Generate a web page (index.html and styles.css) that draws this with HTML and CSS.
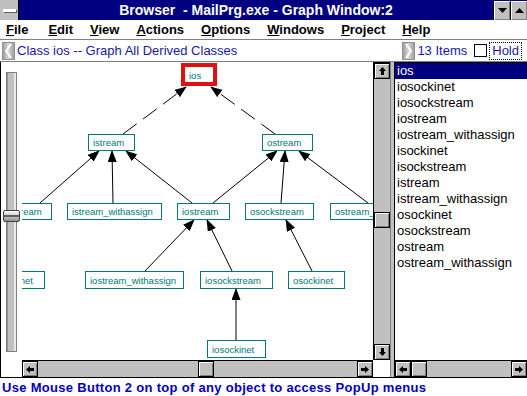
FILE: index.html
```html
<!DOCTYPE html>
<html lang="en">
<head>
    <meta charset="UTF-8">
    <title>Browser - MailPrg.exe - Graph Window:2</title>
    <link rel="stylesheet" href="styles.css">
</head>
<body>
    <div class="app">
        <div class="titlebar">
            <div class="sysmenu"><span class="sysbar"></span></div>
            <div class="title">Browser&nbsp; - MailPrg.exe - Graph Window:2</div>
            <div class="tbtn"><svg width="9" height="5" viewBox="0 0 9 5"><path d="M0 0h9L4.5 5z"/></svg></div>
            <div class="tbtn"><svg width="9" height="5" viewBox="0 0 9 5"><path d="M0 5h9L4.5 0z"/></svg></div>
        </div>

        <div class="menubar">
            <span class="first"><u>F</u>ile</span>
            <span><u>E</u>dit</span>
            <span><u>V</u>iew</span>
            <span><u>A</u>ctions</span>
            <span><u>O</u>ptions</span>
            <span><u>W</u>indows</span>
            <span><u>P</u>roject</span>
            <span><u>H</u>elp</span>
        </div>

        <div class="toolbar">
            <div class="navbtn"><svg width="7" height="14" viewBox="0 0 7 14"><path d="M6 0L1 7l5 7" fill="none" stroke="#fff" stroke-width="2"/></svg></div>
            <div class="caption">Class ios -- Graph All Derived Classes</div>
            <div class="spacer"></div>
            <div class="navbtn"><svg width="7" height="14" viewBox="0 0 7 14"><path d="M1 0l5 7-5 7" fill="none" stroke="#fff" stroke-width="2"/></svg></div>
            <div class="count">13 Items</div>
            <div class="check"></div>
            <div class="hold">Hold</div>
        </div>

        <div class="main">
            <div class="graph-pane">
                <div class="zoom-slider">
                    <div class="track"></div>
                    <div class="knob"></div>
                </div>

                <div class="canvas">
                    <svg width="351" height="298" viewBox="22 62 351 298">
                        <defs>
                            <marker id="arrow" markerUnits="userSpaceOnUse" markerWidth="12" markerHeight="9" refX="11" refY="4.5" orient="auto">
                                <path d="M0 0L12 4.5L0 9z" fill="#000"/>
                            </marker>
                        </defs>

                        <!-- edges, child top to parent bottom -->
                        <g class="edge dashed">
                            <line x1="123" y1="134" x2="186" y2="87"/>
                            <line x1="275" y1="134" x2="211" y2="87"/>
                        </g>
                        <g class="edge">
                            <line x1="40" y1="203" x2="99" y2="151"/>
                            <line x1="113" y1="203" x2="112" y2="151"/>
                            <line x1="192" y1="203" x2="126" y2="151"/>
                            <line x1="213" y1="203" x2="277" y2="151"/>
                            <line x1="281" y1="203" x2="285" y2="151"/>
                            <line x1="368" y1="203" x2="299" y2="151"/>
                            <line x1="145" y1="271" x2="194" y2="220"/>
                            <line x1="232" y1="271" x2="207" y2="220"/>
                            <line x1="312" y1="271" x2="286" y2="220"/>
                            <line x1="236" y1="340" x2="236" y2="289"/>
                        </g>

                        <!-- nodes -->
                        <g class="node root">
                            <rect x="183" y="65" width="32" height="19"/>
                            <text x="189" y="79">ios</text>
                        </g>
                        <g class="node">
                            <rect x="88.5" y="134.5" width="46" height="16"/>
                            <text x="93" y="146">istream</text>
                        </g>
                        <g class="node">
                            <rect x="262.5" y="134.5" width="50" height="16"/>
                            <text x="267" y="146">ostream</text>
                        </g>
                        <g class="node">
                            <rect x="-14.5" y="203.5" width="66" height="16"/>
                            <text x="-9" y="215">isockstream</text>
                        </g>
                        <g class="node">
                            <rect x="67.5" y="203.5" width="94" height="16"/>
                            <text x="72" y="215">istream_withassign</text>
                        </g>
                        <g class="node">
                            <rect x="177.5" y="203.5" width="52" height="16"/>
                            <text x="182" y="215">iostream</text>
                        </g>
                        <g class="node">
                            <rect x="245.5" y="203.5" width="68" height="16"/>
                            <text x="250" y="215">osockstream</text>
                        </g>
                        <g class="node">
                            <rect x="330.5" y="203.5" width="94" height="16"/>
                            <text x="335" y="215">ostream_withassign</text>
                        </g>
                        <g class="node">
                            <rect x="-9.5" y="271.5" width="54" height="17"/>
                            <text x="-4" y="284">isockinet</text>
                        </g>
                        <g class="node">
                            <rect x="85.5" y="271.5" width="98" height="17"/>
                            <text x="90" y="284">iostream_withassign</text>
                        </g>
                        <g class="node">
                            <rect x="200.5" y="271.5" width="72" height="17"/>
                            <text x="205" y="284">iosockstream</text>
                        </g>
                        <g class="node">
                            <rect x="288.5" y="271.5" width="56" height="17"/>
                            <text x="293" y="284">osockinet</text>
                        </g>
                        <g class="node">
                            <rect x="207.5" y="340.5" width="58" height="17"/>
                            <text x="212" y="353">iosockinet</text>
                        </g>
                    </svg>
                </div>

                <div class="vscroll">
                    <div class="sbtn"><svg width="7" height="8" viewBox="0 0 7 8"><path d="M3.5 0L7 4H5v4H2V4H0z"/></svg></div>
                    <div class="vtrack graph-v"><div class="thumb"></div></div>
                    <div class="sbtn"><svg width="7" height="8" viewBox="0 0 7 8"><path d="M2 0h3v4h2L3.5 8L0 4h2z"/></svg></div>
                </div>

                <div class="blank"></div>

                <div class="hscroll">
                    <div class="sbtn"><svg width="8" height="7" viewBox="0 0 8 7"><path d="M0 3.5L4 0v2h4v3H4v2z"/></svg></div>
                    <div class="htrack graph-h"><div class="thumb"></div></div>
                    <div class="sbtn"><svg width="8" height="7" viewBox="0 0 8 7"><path d="M8 3.5L4 0v2H0v3h4v2z"/></svg></div>
                </div>

                <div class="blank"></div>
            </div>

            <div class="splitter"></div>

            <div class="list-pane">
                <ul class="list">
                    <li class="selected">ios</li>
                    <li>iosockinet</li>
                    <li>iosockstream</li>
                    <li>iostream</li>
                    <li>iostream_withassign</li>
                    <li>isockinet</li>
                    <li>isockstream</li>
                    <li>istream</li>
                    <li>istream_withassign</li>
                    <li>osockinet</li>
                    <li>osockstream</li>
                    <li>ostream</li>
                    <li>ostream_withassign</li>
                </ul>
                <div class="hscroll">
                    <div class="sbtn"><svg width="8" height="7" viewBox="0 0 8 7"><path d="M0 3.5L4 0v2h4v3H4v2z"/></svg></div>
                    <div class="htrack"><div class="thumb"></div></div>
                    <div class="sbtn"><svg width="8" height="7" viewBox="0 0 8 7"><path d="M8 3.5L4 0v2H0v3h4v2z"/></svg></div>
                </div>
            </div>
        </div>

        <div class="status">Use Mouse Button 2 on top of any object to access PopUp menus</div>
    </div>
</body>
</html>
```

FILE: styles.css
```css
* {
    box-sizing: border-box;
}

body {
    margin: 0;
    background: #fff;
    font-family: 'Liberation Sans', Arial, sans-serif;
    color: #000;
}

.app {
    width: 527px;
    height: 396px;
    display: flex;
    flex-direction: column;
    overflow: hidden;
}

/* title bar */
.titlebar {
    height: 20px;
    display: flex;
    background: #000080;
    color: #fff;
}

.sysmenu {
    width: 19px;
    background: #c0c0c0;
    border-right: 1px solid #000;
    display: flex;
    align-items: center;
    justify-content: center;
}

.sysbar {
    width: 13px;
    height: 3px;
    background: #fff;
    box-shadow: 1px 1px 0 #606060;
}

.title {
    flex: 1;
    text-align: center;
    font-weight: bold;
    font-size: 14px;
    line-height: 20px;
}

.tbtn {
    width: 17px;
    height: 19px;
    margin-top: 1px;
    background: #c0c0c0;
    border-left: 1px solid #000;
    box-shadow: inset 1px 1px #fff, inset -1px -1px #808080;
    display: flex;
    align-items: center;
    justify-content: center;
}

/* menu bar */
.menubar {
    height: 20px;
    border-bottom: 1px solid #808080;
    display: flex;
    gap: 17px;
    padding-left: 6px;
    font-size: 13px;
    font-weight: bold;
    line-height: 19px;
}

.menubar .first {
    margin-right: 3px;
}

/* toolbar */
.toolbar {
    height: 22px;
    border-bottom: 1px solid #808080;
    display: flex;
    align-items: center;
    font-size: 13px;
    color: #1818a8;
}

.navbtn {
    width: 13px;
    height: 18px;
    margin-left: 2px;
    background: linear-gradient(90deg, #a0a0a0, #d8d8d8 50%, #a0a0a0);
    border: 1px solid #909090;
    display: flex;
    align-items: center;
    justify-content: center;
}

.caption {
    margin-left: 2px;
}

.spacer {
    flex: 1;
}

.count {
    margin-left: 2px;
}

.check {
    width: 13px;
    height: 13px;
    margin-left: 7px;
    border: 1px solid #000040;
    background: #fff;
}

.hold {
    height: 18px;
    margin: 0 5px 0 2px;
    padding: 0 2px;
    border: 1px dotted #000;
    line-height: 16px;
}

/* main area */
.main {
    height: 315px;
    display: flex;
}

.graph-pane {
    display: grid;
    grid-template-columns: 21px 351px 17px;
    grid-template-rows: 298px 17px;
    border-left: 1px solid #000;
}

.zoom-slider {
    position: relative;
    background: #fff;
    padding: 10px 0 0 5px;
}

.track {
    width: 11px;
    height: 280px;
    background: #c0c0c0;
    border: 1px solid #808080;
    box-shadow: inset -2px 0 #e8e8e8, inset 1px 0 #909090;
}

.knob {
    position: absolute;
    left: 2px;
    top: 148px;
    width: 17px;
    height: 12px;
    border: 1px solid #404040;
    border-radius: 2px;
    background: linear-gradient(#fff, #d0d0d0 40%, #606060 45%, #606060 55%, #c0c0c0 60%, #909090);
}

.canvas {
    overflow: hidden;
    background: #fff;
}

.canvas svg {
    display: block;
}

.edge line {
    stroke: #000;
    stroke-width: 1;
    marker-end: url(#arrow);
}

.edge.dashed line {
    stroke-dasharray: 17 8;
}

.node rect {
    fill: #fff;
    stroke: #007878;
    stroke-width: 1;
}

.node text {
    font-family: 'Liberation Sans', Arial, sans-serif;
    font-size: 9.5px;
    fill: #007878;
}

.node.root rect {
    stroke: #e01010;
    stroke-width: 4;
}

.blank {
    background: #fff;
}

/* scrollbars */
.vscroll {
    display: flex;
    flex-direction: column;
    background: #c0c0c0;
    border-left: 1px solid #000;
    border-top: 1px solid #000;
}

.hscroll {
    height: 17px;
    display: flex;
    background: #c0c0c0;
    border-top: 1px solid #000;
}

.sbtn,
.thumb {
    width: 16px;
    height: 16px;
    flex: none;
    background: #c0c0c0;
    box-shadow: inset 1px 1px #fff, inset -1px -1px #808080;
    border: 1px solid #000;
    display: flex;
    align-items: center;
    justify-content: center;
}

.vtrack,
.htrack {
    flex: 1;
}

.graph-v {
    padding-top: 133px;
}

.graph-h {
    padding-left: 160px;
}

.splitter {
    width: 5px;
    background: #c0c0c0;
    border-right: 1px solid #000;
    border-left: 1px solid #808080;
}

.list-pane {
    width: 132px;
    display: flex;
    flex-direction: column;
}

.list {
    flex: 1;
    margin: 0;
    padding: 0;
    list-style: none;
    border-top: 1px solid #000;
    font-size: 13px;
}

.list li {
    height: 16px;
    line-height: 16px;
    padding-left: 2px;
    white-space: nowrap;
}

.list li.selected {
    background: #000080;
    color: #fff;
}

/* status line */
.status {
    height: 19px;
    border-top: 1px solid #000;
    padding: 1px 0 0 2px;
    font-size: 13px;
    font-weight: bold;
    letter-spacing: 0.3px;
    line-height: 18px;
    color: #0000c0;
    white-space: nowrap;
}
```
